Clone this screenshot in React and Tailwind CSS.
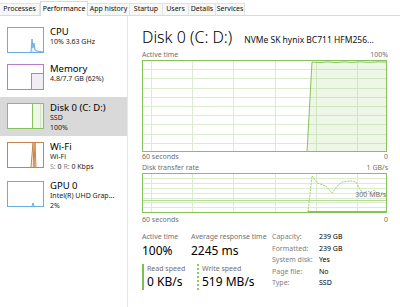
import React from 'react';

const tabs = [
  { label: 'Processes', w: 'w-[40px]' },
  { label: 'Performance', w: 'w-[48px]', active: true },
  { label: 'App history', w: 'w-[42px]' },
  { label: 'Startup', w: 'w-[33px]' },
  { label: 'Users', w: 'w-[26px]' },
  { label: 'Details', w: 'w-[27px]' },
  { label: 'Services', w: 'w-[29px]' },
];

const GRID_X = [9, 50, 91, 133, 174, 215];
const GREEN = '#86c25a';
const GRID = '#dcedcf';

function Thumb({ color, children }) {
  return (
    <svg width="37" height="26" viewBox="0 0 37 26" className="shrink-0">
      <rect x="0.5" y="0.5" width="36" height="25" fill="#fff" stroke={color} />
      {children}
      <rect x="0.5" y="0.5" width="36" height="25" fill="none" stroke={color} />
    </svg>
  );
}

const items = [
  {
    title: 'CPU',
    lines: ['10% 3.63 GHz'],
    thumb: (
      <Thumb color="#6aaee0">
        <polyline points="24,25 25,12 26,21 27,16 28,23 30,24 36,25" fill="#e3f0fa" stroke="#6aaee0" />
      </Thumb>
    ),
  },
  {
    title: 'Memory',
    lines: ['4.8/7.7 GB (62%)'],
    thumb: (
      <Thumb color="#b97acb">
        <rect x="24.5" y="9.5" width="12" height="16" fill="#f1edf2" stroke="#b97acb" />
      </Thumb>
    ),
  },
  {
    title: 'Disk 0 (C: D:)',
    lines: ['SSD', '100%'],
    selected: true,
    thumb: (
      <Thumb color={GREEN}>
        <rect x="25" y="1" width="11" height="24" fill="#eef6e7" />
        <line x1="25.5" y1="1" x2="25.5" y2="25" stroke={GREEN} />
        <line x1="33.5" y1="1" x2="33.5" y2="25" stroke="#cfe6bd" />
      </Thumb>
    ),
  },
  {
    title: 'Wi-Fi',
    lines: ['Wi-Fi', 'wifi'],
    thumb: (
      <Thumb color="#c9844b">
        <polyline points="24,25 26,1 27,25 28,1 29,25" fill="#f6e7da" stroke="#c9844b" />
      </Thumb>
    ),
  },
  {
    title: 'GPU 0',
    lines: ['Intel(R) UHD Grap...', '2%'],
    thumb: (
      <Thumb color="#6aaee0">
        <polyline points="25,25 26,22 27,25" fill="none" stroke="#6aaee0" />
      </Thumb>
    ),
  },
];

function SideItem({ item, first }) {
  return (
    <div
      className={`h-[39px] flex items-start pl-[7px] ${first ? 'pt-[8px]' : 'pt-[6px]'} ${
        item.selected ? 'bg-[#d9d9d9]' : ''
      }`}
    >
      {item.thumb}
      <div className="ml-[6px] -mt-[1px] whitespace-nowrap">
        <div className="text-[9.5px] leading-[11px] text-black">{item.title}</div>
        {item.lines.map((l) =>
          l === 'wifi' ? (
            <div key={l} className="text-[7px] leading-[9.5px] text-[#222]">
              <span className="text-[#8a8a8a]">S:</span> 0 <span className="text-[#8a8a8a]">R:</span> 0 Kbps
            </div>
          ) : (
            <div key={l} className="text-[7px] leading-[10px] text-[#222]">{l}</div>
          )
        )}
      </div>
    </div>
  );
}

function ActiveChart() {
  const rows = Array.from({ length: 9 }, (_, i) => (i + 1) * 9.2);
  return (
    <svg width="245" height="92" viewBox="0 0 245 92" className="block">
      <rect width="245" height="92" fill="#fff" />
      {GRID_X.map((x) => (
        <line key={x} x1={x + 0.5} y1="0" x2={x + 0.5} y2="92" stroke={GRID} />
      ))}
      {rows.map((y) => (
        <line key={y} x1="0" y1={Math.round(y) + 0.5} x2="245" y2={Math.round(y) + 0.5} stroke={GRID} />
      ))}
      <polygon
        points="165,92 170,2 178,2.5 186,1.8 194,2.6 202,1.8 210,2.4 218,1.8 228,2.3 236,1.8 245,2 245,92"
        fill="rgba(134,194,90,0.14)"
        stroke={GREEN}
      />
      <rect x="0.5" y="0.5" width="244" height="91" fill="none" stroke={GREEN} />
    </svg>
  );
}

function RateChart() {
  const rows = Array.from({ length: 7 }, (_, i) => (i + 1) * 4.9);
  const write =
    '166,39 170,3 175,10 184,13 190,20 195,13 200,9 209,8 214,9 219,18 222,20 225,18 229,19 232,17 235,20 240,21 245,21';
  return (
    <div className="relative w-[245px] h-[40px]">
      <svg width="245" height="40" viewBox="0 0 245 40" className="block">
        <rect width="245" height="40" fill="#fff" />
        {GRID_X.map((x) => (
          <line key={x} x1={x + 0.5} y1="0" x2={x + 0.5} y2="40" stroke={GRID} />
        ))}
        {rows.map((y) => (
          <line key={y} x1="0" y1={Math.round(y) + 0.5} x2="245" y2={Math.round(y) + 0.5} stroke={GRID} />
        ))}
        <line x1="0" y1="27.5" x2="245" y2="27.5" stroke="#b5d99a" />
        <polyline points={write} fill="none" stroke="#9fd16f" strokeDasharray="2 1" />
        <line x1="166" y1="38.5" x2="245" y2="38.5" stroke={GREEN} />
        <rect x="0.5" y="0.5" width="244" height="39" fill="none" stroke={GREEN} />
      </svg>
      <span className="absolute right-[1px] top-[17px] text-[7px] leading-[10px] text-[#707070]">300 MB/s</span>
    </div>
  );
}

const props = [
  ['Capacity:', '239 GB'],
  ['Formatted:', '239 GB'],
  ['System disk:', 'Yes'],
  ['Page file:', 'No'],
  ['Type:', 'SSD'],
];

export default function App() {
  return (
    <div className="w-[400px] h-[307px] bg-white overflow-hidden font-['Segoe_UI','Noto_Sans',sans-serif] text-black">
      <div className="h-[16px] flex items-end border-b border-[#dadada]">
        {tabs.map((t) =>
          t.active ? (
            <div
              key={t.label}
              className={`${t.w} h-[15px] -mb-[1px] bg-white border border-b-0 border-[#dadada] flex items-center justify-center text-[7px] whitespace-nowrap`}
            >
              {t.label}
            </div>
          ) : (
            <div
              key={t.label}
              className={`${t.w} h-[12px] bg-[#f7f7f7] border-t border-r border-[#e3e3e3] flex items-center justify-center text-[7px] text-[#111] whitespace-nowrap`}
            >
              {t.label}
            </div>
          )
        )}
      </div>
      <div className="flex h-[291px]">
        <aside className="w-[128px] border-r border-[#e6e6e6] pt-[3px] shrink-0">
          {items.map((it, i) => (
            <SideItem key={it.title} item={it} first={i === 0} />
          ))}
        </aside>
        <main className="flex-1 pl-[14px] pr-[12px]">
          <div className="mt-[10px] flex items-baseline h-[22px] whitespace-nowrap">
            <span className="text-[16px] font-light leading-[22px]">Disk 0 (C: D:)</span>
            <span className="ml-[12px] text-[8.5px] leading-[22px] text-[#111]">NVMe SK hynix BC711 HFM256...</span>
          </div>
          <div className="mt-[2px] flex justify-between text-[7px] leading-[10px] text-[#707070]">
            <span>Active time</span>
            <span>100%</span>
          </div>
          <ActiveChart />
          <div className="flex justify-between text-[7px] leading-[10px] text-[#707070]">
            <span>60 seconds</span>
            <span>0</span>
          </div>
          <div className="mt-[1px] flex justify-between text-[7px] leading-[10px] text-[#707070]">
            <span>Disk transfer rate</span>
            <span>1 GB/s</span>
          </div>
          <RateChart />
          <div className="mt-[2px] flex justify-between text-[7px] leading-[10px] text-[#707070]">
            <span>60 seconds</span>
            <span>0</span>
          </div>
          <div className="mt-[7px] flex">
            <div className="w-[130px]">
              <div className="flex">
                <div className="w-[49px]">
                  <div className="text-[7px] leading-[10px] text-[#707070]">Active time</div>
                  <div className="text-[12px] leading-[18px]">100%</div>
                </div>
                <div>
                  <div className="text-[7px] leading-[10px] text-[#707070] whitespace-nowrap">Average response time</div>
                  <div className="text-[12px] leading-[18px]">2245 ms</div>
                </div>
              </div>
              <div className="flex mt-[4px]">
                <div className="w-[55px] border-l-2 border-[#7fbf4f] pl-[3px]">
                  <div className="text-[7px] leading-[10px] text-[#707070]">Read speed</div>
                  <div className="text-[12px] leading-[16px]">0 KB/s</div>
                </div>
                <div className="border-l-2 border-dotted border-[#8fcb5f] pl-[3px]">
                  <div className="text-[7px] leading-[10px] text-[#707070]">Write speed</div>
                  <div className="text-[12px] leading-[16px] whitespace-nowrap">519 MB/s</div>
                </div>
              </div>
            </div>
            <div className="grid grid-cols-[47px_auto] text-[7px] leading-[10.75px]">
              {props.map(([k, v]) => (
                <React.Fragment key={k}>
                  <span className="text-[#808080] whitespace-nowrap">{k}</span>
                  <span className="text-black">{v}</span>
                </React.Fragment>
              ))}
            </div>
          </div>
        </main>
      </div>
    </div>
  );
}
